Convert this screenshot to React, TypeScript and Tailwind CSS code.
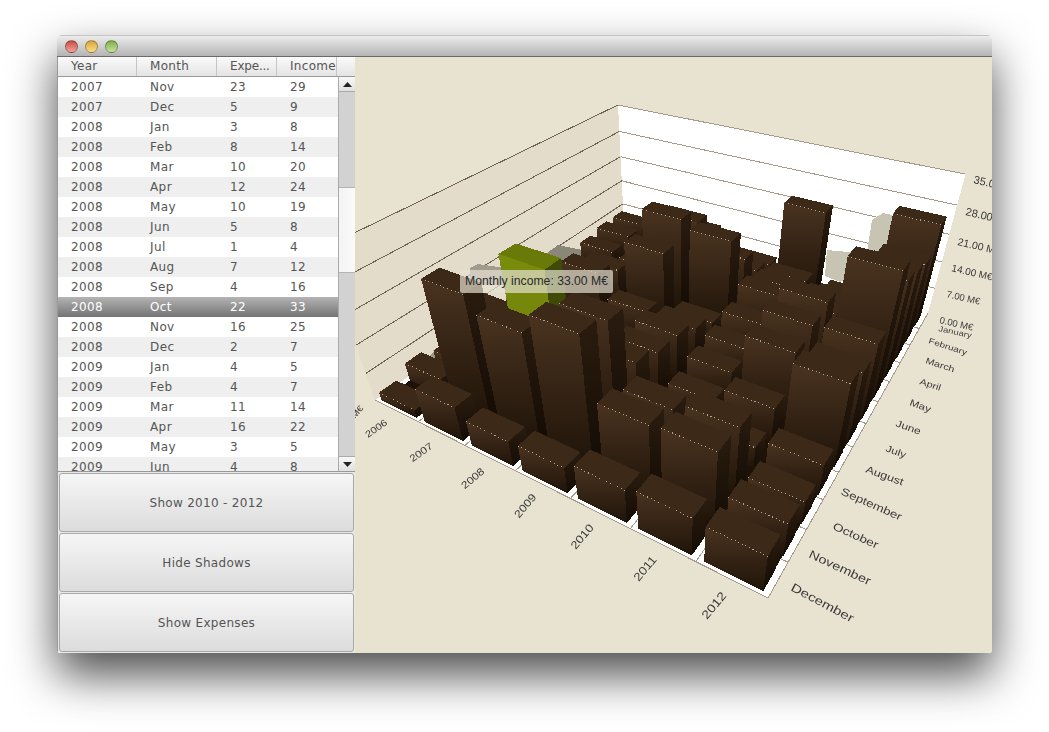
import React from "react";

const rows: [string, string, number, number][] = [
  ["2007","Nov",23,29],["2007","Dec",5,9],["2008","Jan",3,8],["2008","Feb",8,14],["2008","Mar",10,20],
  ["2008","Apr",12,24],["2008","May",10,19],["2008","Jun",5,8],["2008","Jul",1,4],["2008","Aug",7,12],
  ["2008","Sep",4,16],["2008","Oct",22,33],["2008","Nov",16,25],["2008","Dec",2,7],["2009","Jan",4,5],
  ["2009","Feb",4,7],["2009","Mar",11,14],["2009","Apr",16,22],["2009","May",3,5],["2009","Jun",4,8],
];

const income: number[][] = [
  [6,6,5,3,2,2,3,4,5,3,4.5,2],
  [6,5,4,5,11,14,6,10,7,20,29,8.5],
  [8,14,20,24,19,8,4,12,16,34,25.5,6.2],
  [5,7,14,22,5,8,11,11.5,14,28,30,6.4],
  [22.5,8,10,12,9,7.3,6.5,4.7,6,14,16.5,8.2],
  [3,6,10,12,19,18,16.5,8.5,5,16,17,9.2],
  [26,20,22,24,30,18.5,17,20,7.3,5.5,8,8.7],
];

const Q = [[624,226],[928,313],[768,598],[375,400]];
const VP = [675,1250];
const K = -0.00302;
function makeProj() {
  const [[x0,y0],[x1,y1],[x2,y2],[x3,y3]] = Q;
  const dx1=x1-x2,dx2=x3-x2,sx=x0-x1+x2-x3,dy1=y1-y2,dy2=y3-y2,sy=y0-y1+y2-y3;
  const den=dx1*dy2-dx2*dy1;
  const g=(sx*dy2-dx2*sy)/den,h=(dx1*sy-sx*dy1)/den;
  const a=x1-x0+g*x1,b=x3-x0+h*x3,d=y1-y0+g*y1,e=y3-y0+h*y3;
  return (i:number,j:number,z:number):[number,number]=>{
    const u=i/7,v=j/12;
    const w=g*u+h*v+1+z*K;
    return [(a*u+b*v+x0+z*K*VP[0])/w,(d*u+e*v+y0+z*K*VP[1])/w];
  };
}
const P = makeProj();
const pts = (l:[number,number][]) => l.map(p=>p[0].toFixed(1)+","+p[1].toFixed(1)).join(" ");

function Bar({i,j,z,hl}:{i:number;j:number;z:number;hl:boolean}){
  const m=0.09;
  const a0=i+m,a1=i+1-m,b1=j+1-m,b0=b1-0.6;
  const top=[P(a0,b0,z),P(a1,b0,z),P(a1,b1,z),P(a0,b1,z)] as [number,number][];
  const front=[P(a0,b1,z),P(a1,b1,z),P(a1,b1,0),P(a0,b1,0)] as [number,number][];
  const side=[P(a1,b0,z),P(a1,b1,z),P(a1,b1,0),P(a1,b0,0)] as [number,number][];
  return (
    <g>
      <polygon points={pts(top)} fill={hl?"#6a7a08":"#3c2918"} />
      <polygon points={pts(front)} fill={hl?"url(#gh)":"url(#gf)"} />
      <polygon points={pts(side)} fill={hl?"#3f4a06":"url(#gs)"} />
      {!hl && <line x1={top[3][0]} y1={top[3][1]} x2={top[2][0]} y2={top[2][1]} stroke="#d0c0a8" strokeOpacity="0.8" strokeWidth="1" strokeDasharray="1 3" />}
    </g>
  );
}

const months: [string,number,number,number,number][] = [
  ["January",938,331,12,9.5],["February",928,343,18,10],["March",925,363,18,10.8],["April",919,384,18,11],
  ["May",909,405,20,11.6],["June",895,426,20,12],["July",885,451,20,11.8],["August",865,472,20,12.7],
  ["September",840,494,24,13.4],["October",832,529,24,13.7],["November",808,557,25,14.5],["December",790,590,28,15],
];
const years: [string,number,number,number,number][] = [
  ["2006",378,431,-35,11],["2007",423,455,-35,11.5],["2008",475,481,-40,12],["2009",528,508,-50,12.5],
  ["2010",585,539,-50,13],["2011",648,571,-50,13.5],["2012",717,608,-50,14],
];
const values: [string,number,number,number][] = [
  ["35.00 M€",973,183,11],["28.00 M€",965,215,11],["21.00 M€",957,245,10.5],["14.00 M€",951,271,10],
  ["7.00 M€",946,297,9.5],["0.00 M€",939,323,9.5],
];

function Chart(){
  const levels=[35,28,21,14,7];
  const bars:React.ReactNode[]=[];
  income.forEach((col,i)=>col.forEach((v,j)=>{
    bars.push(<Bar key={i+"-"+j} i={i} j={j} z={v} hl={i===2&&j===9} />);
  }));
  const ticksY=[1,2,3,4,5,6];
  const ticksM=[1,2,3,4,5,6,7,8,9,10,11];
  return (
    <svg viewBox="355 57 637 596" className="block w-full h-full" style={{fontFamily:"'Liberation Sans',sans-serif"}}>
      <defs>
        <linearGradient id="gf" x1="0" y1="0" x2="0" y2="1"><stop offset="0" stopColor="#4a3320"/><stop offset="1" stopColor="#1f1409"/></linearGradient>
        <linearGradient id="gs" x1="0" y1="0" x2="0" y2="1"><stop offset="0" stopColor="#2a1c0f"/><stop offset="1" stopColor="#140c05"/></linearGradient>
        <linearGradient id="gh" x1="0" y1="0" x2="0" y2="1"><stop offset="0" stopColor="#7a8c0c"/><stop offset="1" stopColor="#6c7c08"/></linearGradient>
      </defs>
      <g shapeRendering="crispEdges">
        <polygon points={pts([P(0,0,35),P(0,12,35),P(0,12,0),P(0,0,0)])} fill="#e3dccb"/>
        <polygon points={pts([P(0,0,35),P(7,0,35),P(7,0,0),P(0,0,0)])} fill="#ffffff"/>
        <polygon points={pts([P(0,0,0),P(7,0,0),P(7,12,0),P(0,12,0)])} fill="#ffffff"/>
        {levels.map(l=>{const a=P(0,0,l),b=P(0,12,l),c=P(7,0,l);return (
          <g key={l}>
            <line x1={a[0]} y1={a[1]} x2={b[0]} y2={b[1]} stroke="#6e6353" strokeWidth="1"/>
            <line x1={a[0]} y1={a[1]} x2={c[0]} y2={c[1]} stroke="#a89a8a" strokeWidth="1"/>
          </g>);})}
        {ticksY.map(t=>{const a=P(t,12,0),b=P(t,11,0);return <line key={t} x1={a[0]} y1={a[1]} x2={b[0]} y2={b[1]} stroke="#a89a8a" strokeWidth="1"/>;})}
        {ticksM.map(t=>{const a=P(7,t,0),b=P(6,t,0);return <line key={t} x1={a[0]} y1={a[1]} x2={b[0]} y2={b[1]} stroke="#a89a8a" strokeWidth="1"/>;})}
        <polygon points="547,253 558,245 582,250 582,272 550,272" fill="#8a8678"/>
        <polygon points="470,268 478,264 505,268 505,285 470,285" fill="#a09c8e"/>
        <polygon points="428,358 434,351 445,353 445,362 430,362" fill="#9c988a"/>
        <polygon points="825,276 827,250 848,252 858,250 867,252 872,220 883,213 892,215 890,260 840,282" fill="#c8c4b4"/>
        <polygon points={pts([P(0.1,0.3,0),P(6.9,0.3,0),P(6.9,11.3,0),P(0.1,11.3,0)])} fill="#1c1207"/>
        {bars}
        <polyline points={pts([P(0,12,0),P(7,12,0),P(7,0,0)])} fill="none" stroke="#a89a8a" strokeWidth="1"/>
      </g>
      <g fill="#3a3a3a" className="blur-[0.35px]">
        {months.map(([t,x,y,r,s])=>(
          <text key={t} transform={`translate(${x} ${y}) rotate(${r}) scale(1 0.8)`} fontSize={s}>{t}</text>
        ))}
        {years.map(([t,x,y,r,s])=>(
          <text key={t} transform={`translate(${x} ${y}) rotate(${r}) scale(1 0.85)`} fontSize={s} textAnchor="middle">{t}</text>
        ))}
        {values.map(([t,x,y,s])=>(
          <text key={t} transform={`translate(${x} ${y}) rotate(13)`} fontSize={s}>{t}</text>
        ))}
        <text transform="translate(355 419) rotate(-50) scale(1 0.85)" fontSize="10">M€</text>
      </g>
    </svg>
  );
}

function Light({c}:{c:string}){
  return <span className={"block w-[13px] h-[13px] rounded-full border border-black/30 "+c} />;
}

function Btn({t}:{t:string}){
  return (
    <button className="h-[59px] shrink-0 mx-px rounded-[3px] border border-[#a8a8a8] bg-gradient-to-b from-[#f6f6f6] to-[#dcdcdc] text-[12px] text-[#555] tracking-[0.3px]">
      {t}
    </button>
  );
}

export default function App(){
  return (
    <div className="w-[1049px] h-[732px] bg-white pl-[57px] pt-[35px] overflow-hidden" style={{fontFamily:"'DejaVu Sans',sans-serif"}}>
      <div className="w-[935px] h-[618px] flex flex-col rounded-t-[5px] rounded-b-[3px] shadow-[0_22px_46px_rgba(0,0,0,0.7)] overflow-hidden">
        <div className="h-[22px] shrink-0 flex items-center gap-[7px] pl-[8px] border-t border-[#c4c4c4] border-b-[#6a6a6a] border-b bg-gradient-to-b from-[#ececec] to-[#b4b4b4]">
          <Light c="bg-gradient-to-b from-[#c84b45] to-[#f0a59c]" />
          <Light c="bg-gradient-to-b from-[#d9a431] to-[#f8dc8a]" />
          <Light c="bg-gradient-to-b from-[#7fae45] to-[#c8e3a0]" />
        </div>
        <div className="flex-1 flex min-h-0">
          <div className="w-[298px] shrink-0 flex flex-col gap-px bg-[#e8e8e8] border-l border-[#999]">
            <div className="h-[415px] shrink-0 flex flex-col">
              <div className="h-[20px] shrink-0 flex border-b border-[#9a9a9a] bg-gradient-to-b from-[#fafafa] to-[#e4e4e4] text-[12px] font-normal text-[#555] tracking-[0.3px] leading-[19px]">
                <div className="w-[79px] pl-[13px] border-r border-[#c4c4c4]">Year</div>
                <div className="w-[80px] pl-[13px] border-r border-[#c4c4c4]">Month</div>
                <div className="w-[60px] pl-[13px] border-r border-[#c4c4c4] tracking-[-0.2px]">Expe...</div>
                <div className="w-[60px] pl-[13px] border-r border-[#c4c4c4] whitespace-nowrap overflow-hidden">Income</div>
              </div>
              <div className="h-[395px] shrink-0 flex overflow-hidden border-b border-[#999]">
                <div className="w-[280px] shrink-0 overflow-hidden text-[12px] tracking-[0.4px] text-[#555]">
                  {rows.map((r,idx)=>{
                    const sel=idx===11;
                    return (
                      <div key={idx} className={"h-[20px] flex leading-[20px] "+(sel?"bg-gradient-to-b from-[#b4b4b4] to-[#747474] text-white":idx%2===0?"bg-white":"bg-[#efefef]")}>
                        <div className="w-[79px] pl-[13px]">{r[0]}</div>
                        <div className="w-[80px] pl-[13px]">{r[1]}</div>
                        <div className="w-[60px] pl-[13px]">{r[2]}</div>
                        <div className="w-[60px] pl-[13px]">{r[3]}</div>
                      </div>
                    );
                  })}
                </div>
                <div className="w-[17px] shrink-0 flex flex-col border-l border-[#aaa] bg-[#d2d2d2]">
                  <div className="h-[15px] shrink-0 flex items-center justify-center bg-gradient-to-b from-[#f8f8f8] to-[#e0e0e0] border-b border-[#aaa]">
                    <svg width="9" height="5" viewBox="0 0 9 5"><path d="M4.5 0L9 5H0z" fill="#222"/></svg>
                  </div>
                  <div className="h-[95px] shrink-0" />
                  <div className="h-[86px] shrink-0 bg-gradient-to-r from-[#f4f4f4] to-[#fafafa] border-y border-[#b4b4b4]" />
                  <div className="flex-1" />
                  <div className="h-[15px] shrink-0 flex items-center justify-center bg-gradient-to-b from-[#f8f8f8] to-[#e0e0e0] border-t border-[#aaa]">
                    <svg width="9" height="5" viewBox="0 0 9 5"><path d="M0 0H9L4.5 5z" fill="#222"/></svg>
                  </div>
                </div>
              </div>
            </div>
            <Btn t="Show 2010 - 2012" />
            <Btn t="Hide Shadows" />
            <Btn t="Show Expenses" />
          </div>
          <div className="flex-1 relative bg-[#e8e2d0] overflow-hidden">
            <Chart />
            <div className="absolute left-[105px] top-[213px] w-[153px] h-[23px] rounded-[2px] bg-[#e6e1d2]/70 text-[12.2px] leading-[23px] text-center text-[#2a2a2a] whitespace-nowrap" style={{fontFamily:"'Liberation Sans',sans-serif"}}>
              Monthly income: 33.00 M€
            </div>
          </div>
        </div>
      </div>
    </div>
  );
}
